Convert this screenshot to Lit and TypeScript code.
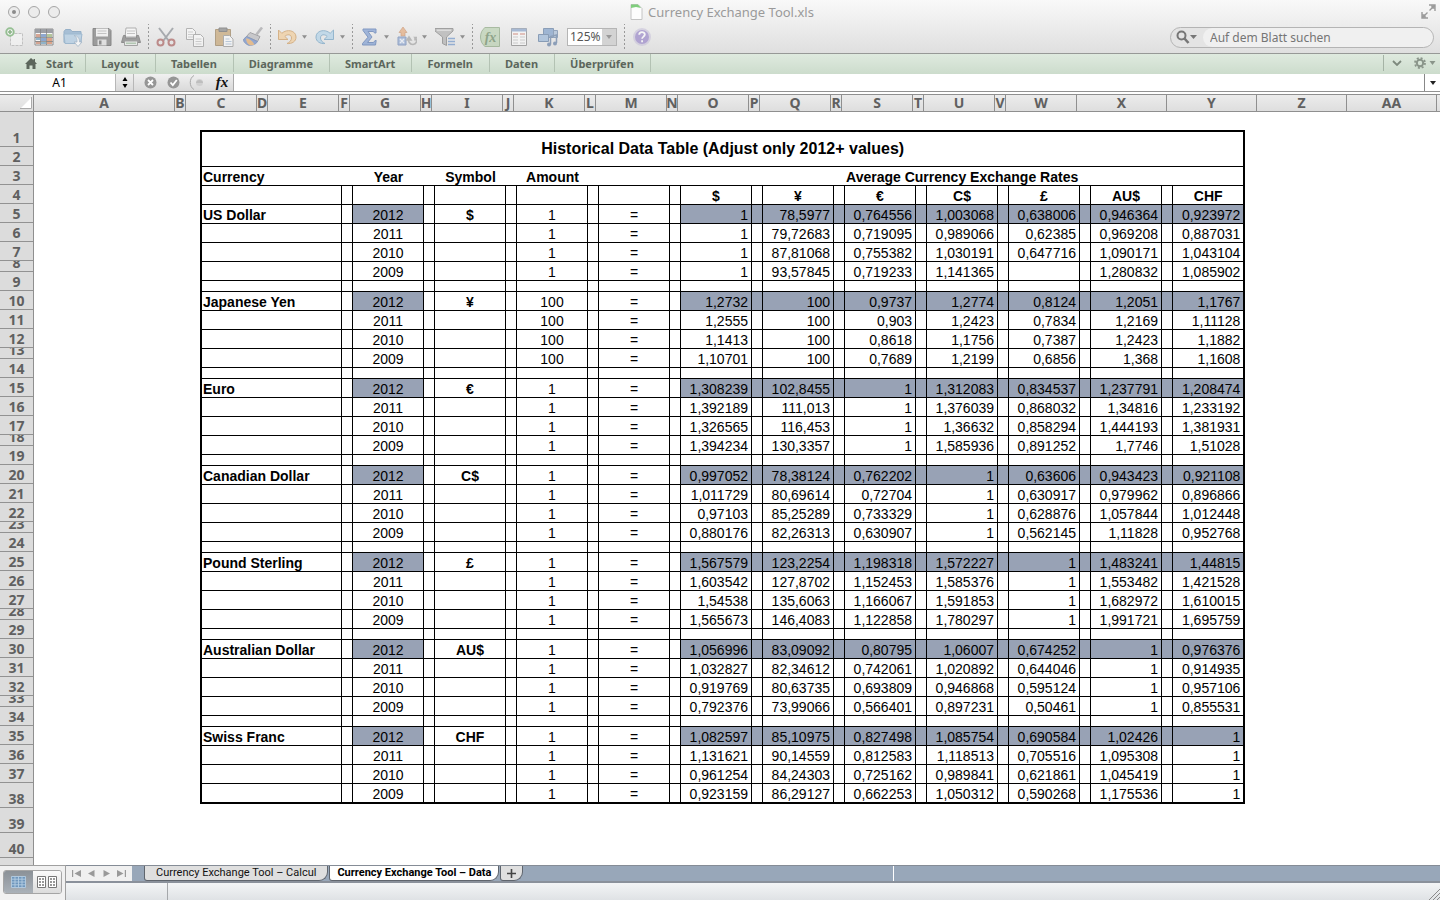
import { LitElement, html, css, svg, nothing } from "lit";
import { customElement, state } from "lit/decorators.js";
import { classMap } from "lit/directives/class-map.js";

interface Block {
  name: string;
  symbol: string;
  amount: string;
  rates: string[][];
}

const YEARS = ["2012", "2011", "2010", "2009"];
const SYMBOLS = ["$", "¥", "€", "C$", "£", "AU$", "CHF"];

const block = (name: string, symbol: string, amount: string, ...lines: string[]): Block => ({
  name,
  symbol,
  amount,
  rates: lines.map((line) => line.split(" ").map((v) => (v === "-" ? "" : v))),
});

const BLOCKS: Block[] = [
  block("US Dollar", "$", "1",
    "1 78,5977 0,764556 1,003068 0,638006 0,946364 0,923972",
    "1 79,72683 0,719095 0,989066 0,62385 0,969208 0,887031",
    "1 87,81068 0,755382 1,030191 0,647716 1,090171 1,043104",
    "1 93,57845 0,719233 1,141365 - 1,280832 1,085902"),
  block("Japanese Yen", "¥", "100",
    "1,2732 100 0,9737 1,2774 0,8124 1,2051 1,1767",
    "1,2555 100 0,903 1,2423 0,7834 1,2169 1,11128",
    "1,1413 100 0,8618 1,1756 0,7387 1,2423 1,1882",
    "1,10701 100 0,7689 1,2199 0,6856 1,368 1,1608"),
  block("Euro", "€", "1",
    "1,308239 102,8455 1 1,312083 0,834537 1,237791 1,208474",
    "1,392189 111,013 1 1,376039 0,868032 1,34816 1,233192",
    "1,326565 116,453 1 1,36632 0,858294 1,444193 1,381931",
    "1,394234 130,3357 1 1,585936 0,891252 1,7746 1,51028"),
  block("Canadian Dollar", "C$", "1",
    "0,997052 78,38124 0,762202 1 0,63606 0,943423 0,921108",
    "1,011729 80,69614 0,72704 1 0,630917 0,979962 0,896866",
    "0,97103 85,25289 0,733329 1 0,628876 1,057844 1,012448",
    "0,880176 82,26313 0,630907 1 0,562145 1,11828 0,952768"),
  block("Pound Sterling", "£", "1",
    "1,567579 123,2254 1,198318 1,572227 1 1,483241 1,44815",
    "1,603542 127,8702 1,152453 1,585376 1 1,553482 1,421528",
    "1,54538 135,6063 1,166067 1,591853 1 1,682972 1,610015",
    "1,565673 146,4083 1,122858 1,780297 1 1,991721 1,695759"),
  block("Australian Dollar", "AU$", "1",
    "1,056996 83,09092 0,80795 1,06007 0,674252 1 0,976376",
    "1,032827 82,34612 0,742061 1,020892 0,644046 1 0,914935",
    "0,919769 80,63735 0,693809 0,946868 0,595124 1 0,957106",
    "0,792376 73,99066 0,566401 0,897231 0,50461 1 0,855531"),
  block("Swiss Franc", "CHF", "1",
    "1,082597 85,10975 0,827498 1,085754 0,690584 1,02426 1",
    "1,131621 90,14559 0,812583 1,118513 0,705516 1,095308 1",
    "0,961254 84,24303 0,725162 0,989841 0,621861 1,045419 1",
    "0,923159 86,29127 0,662253 1,050312 0,590268 1,175536 1"),
];

/* Toolbar glyphs, all on a 20 x 20 grid. */
const ICONS: Record<string, unknown> = {
  add: svg`
    <path d="M5.500 6.500h12v12h-12z" fill="#f6f6f6" stroke="#aaa" stroke-dasharray="3 1"/>
    <circle cx="5" cy="5" r="3.800" fill="#fff" stroke="#5fa45a" stroke-width="1.800"/>
    <path d="M5 2.800v4.400M2.800 5h4.400" stroke="#4e9049" stroke-width="1.600"/>`,
  gallery: svg`
    <path d="M1 2h18v16H1z" fill="#fff" stroke="#555"/>
    <path d="M1 2h18v4H1z" fill="#6c6f78"/>
    <path d="M2 7h4v3H2zM2 14h4v3H2z" fill="#c97a5c"/>
    <path d="M7 7h5v3H7zM7 11h5v3H7z" fill="#547fc0"/>
    <path d="M13 7h5v3h-5z" fill="#8fae67"/>
    <path d="M13 11h5v6h-5z" fill="#d57b4e"/>
    <path d="M2 11h4v2H2zM7 15h5v2H7z" fill="#5a93b8"/>
    <path d="M6.500 2v16M12.500 2v16M1 10.500h18M1 14.500h18" stroke="#444" stroke-width=".8"/>`,
  open: svg`
    <path d="M1 4.500l1.500-2h5l1.500 2h9v11H1z" fill="#7ba3c8" stroke="#5f8ab2"/>
    <path d="M1 7h18l-1.500 9.500H2z" fill="#a5c6e2" stroke="#6f9abf"/>
    <path d="M11 8.500c3 1.500 3 4 3 6.500h-3l4 4.500 4-4.500h-2.500c0-3-1-6-5.500-6.500z" fill="#fff" stroke="#7c98b4" stroke-width=".8"/>`,
  save: svg`
    <path d="M1 1.500h16l2 2v15H1z" fill="#6b6b6b" stroke="#4b4b4b"/>
    <path d="M4 1.500h12v8H4z" fill="#f4f4f4"/><path d="M5.500 4h9M5.500 6.500h9" stroke="#aaa"/>
    <path d="M5.500 12.500h9v6h-9z" fill="#ddd"/><path d="M7 13.500h2.500v4H7z" fill="#555"/>`,
  print: svg`
    <path d="M5 1h10l1 9H4z" fill="#fcfcfc" stroke="#888"/>
    <path d="M6 4h8M6 6.500h8" stroke="#aaa"/>
    <path d="M2.500 8.500h2V11h11V8.500h2l2 7h-19z" fill="#6e6e6e" stroke="#555"/>
    <path d="M3.500 14h13v4.500h-13z" fill="#e7ece7" stroke="#777"/><path d="M5 16.200h10" stroke="#6b9a6b"/>`,
  cut: svg`
    <path d="M3 1l9.500 12.500M17 1L7.500 13.500" stroke="#7c8188" stroke-width="2"/>
    <circle cx="4.500" cy="15.500" r="3" fill="none" stroke="#a2504e" stroke-width="2"/>
    <circle cx="15.500" cy="15.500" r="3" fill="none" stroke="#a2504e" stroke-width="2"/>`,
  copy: svg`
    <path d="M1.500 1.500h6l3 3v8h-9z" fill="#fbfbfb" stroke="#8e8e8e"/><path d="M3 5h5M3 7.500h5M3 10h5" stroke="#bbb"/>
    <path d="M8.500 7.500h7l3 3v9h-10z" fill="#fbfbfb" stroke="#8e8e8e"/><path d="M10.500 12h6M10.500 14.500h6M10.500 17h6" stroke="#bbb"/>`,
  paste: svg`
    <path d="M1.500 2.500h15v16h-15z" fill="#c09a63" stroke="#8d7045"/>
    <path d="M5 1h8v3.500H5z" fill="#777" stroke="#555"/>
    <path d="M9.500 8.500h6l3.500 3.500v7.500H9.500z" fill="#fbfbfb" stroke="#888"/><path d="M11.500 12h4M11.500 14.500h6M11.500 17h6" stroke="#9bb4d0"/>`,
  brush: svg`
    <path d="M19 .5l-5.500 7" stroke="#9a9a9e" stroke-width="2.600"/>
    <path d="M7 5.500l10 4-2.500 5-11-5z" fill="#b4b4b8" stroke="#77777c"/>
    <path d="M3.500 9.500l11 5c-1.500 3-6.500 4.500-9.500 3.500C2.500 16.500 0 15 .8 12z" fill="#5c7fc4" stroke="#4767a5"/>
    <path d="M3 11.500c4 0 6 2.500 8.500 6-3.500 2-8 .500-8.500-6z" fill="#e2a157"/>`,
  undo: svg`
    <path d="M1.500 3v9.500H11L7.800 9.400C10 7 14.500 7 14.500 11c0 2.500-2 4.500-4.500 5.500 5 .5 9-2 9-6.500C19 3.500 10 1.500 4.800 6.300z" fill="#f3c98f" stroke="#c98e49"/>`,
  redo: svg`
    <path d="M18.500 3v9.500H9l3.200-3.100C10 7 5.500 7 5.500 11c0 2.500 2 4.500 4.500 5.500-5 .5-9-2-9-6.500C1 3.500 10 1.500 15.200 6.300z" fill="#a9cfe8" stroke="#5f96bd"/>`,
  sum: svg`<path d="M4 2h13v4h-1.500l-1-1.500H9L13 10l-4.500 5.500h6l1.500-2h1.200l-.7 4.500H3.500v-1.500L9 10.200 4 3.500z" fill="#6f93cf" stroke="#3f65a8"/>`,
  sort: svg`
    <path d="M6 0l4 5.500H8V9H4V5.500H2z" fill="#e3a06c" stroke="#bd7748" stroke-width=".7"/>
    <path d="M1 10h8v8H1z" fill="#8ba6d3" stroke="#5877ad"/><path d="M3 12l4 4M7 12l-4 4" stroke="#eaf0fa" stroke-width="1.400"/>
    <path d="M12 10c-1.500 4 .500 7.500 4 7.500 3.500-.5 5-4 2-7h2M12 10l-2 3h4zM18 10.500v3" fill="none" stroke="#999" stroke-width="1.600"/>`,
  filter: svg`
    <path d="M0 1.500h18V4L11.500 10v8.500l-4-2V10L0 4z" fill="#a8a8a8" stroke="#6f6f6f"/><path d="M2 3.200h14" stroke="#e8e8e8"/>
    <path d="M13 11.500h7M13 14.500h7M13 17.500h7" stroke="#5f8ac5" stroke-width="1.600"/>`,
  table: svg`
    <path d="M2.500 1.500h15v17h-15z" fill="#fbfbfb" stroke="#777"/><path d="M2.500 1.500h15v3h-15z" fill="#7c9ac6"/>
    <path d="M4 7h5M11 7h5" stroke="#d38b7e" stroke-width="1.400"/>
    <path d="M4 10h5M11 10h5M4 13h5M11 13h5M4 16h5M11 16h5" stroke="#b9b9b9"/>`,
  media: svg`
    <path d="M5.500 1.500h10v9h-10z" fill="#6d93c4" stroke="#4c6c96"/><path d="M15.500 3.500h4v7h-4z" fill="#9db6d5" stroke="#5b779c"/>
    <path d="M.5 7.500h10v7H.5z" fill="#8fb0d6" stroke="#4c6c96"/>
    <path d="M12.500 17.500v-8l6-1.500v8" fill="none" stroke="#52719b" stroke-width="1.500"/>
    <circle cx="11" cy="17.500" r="2" fill="#52719b"/><circle cx="17" cy="16.500" r="2" fill="#52719b"/>`,
};

/* Column letter followed by its width class. */
const COLUMNS: [string, string][] = [
  ["A", "first"], ["B", "slim"], ["C", "mid"], ["D", "slim"], ["E", "mid"], ["F", "slim"],
  ["G", "mid"], ["H", "slim"], ["I", "mid"], ["J", "slim"], ["K", "mid"], ["L", "slim"],
  ["M", "mid"], ["N", "slim"], ["O", "mid"], ["P", "slim"], ["Q", "mid"], ["R", "slim"],
  ["S", "mid"], ["T", "slim"], ["U", "mid"], ["V", "slim"], ["W", "mid"],
  ["X", "full"], ["Y", "full"], ["Z", "full"], ["AA", "full"], ["", "rest"],
];

const rowSize = (n: number) =>
  n === 1 ? "top" : n >= 38 ? "tall" : n % 5 === 3 && n > 3 ? "thin" : "";

@customElement("sheet-table")
export class SheetTable extends LitElement {
  static styles = css`
    :host { display: block; width: max-content; }
    table {
      border: 2px solid #000;
      border-collapse: separate;
      border-spacing: 0;
      table-layout: fixed;
      width: 1045px;
      font: 14px/16px "Liberation Sans", Arial, sans-serif;
      color: #000;
    }
    .c-name { width: 140px; }
    .c-gap { width: 11px; }
    .c-cell { width: 71px; }
    .c-last { width: 70px; }
    th, td {
      box-sizing: border-box;
      height: 19px;
      padding: 2px 0 0;
      border: 0 solid #000;
      border-width: 0 1px 1px 0;
      text-align: center;
      white-space: nowrap;
    }
    th { font-weight: bold; }
    tr > :last-child { border-right: 0; }
    .open { border-right: 0; }
    .title { height: 35px; padding: 0; font-size: 16px; line-height: 18px; border-right: 0; }
    .name { text-align: left; padding-left: 1px; }
    .num { text-align: right; padding-right: 3px; }
    .fill { background: #98a2b5; }
    .spacer td { height: 11px; padding: 0; line-height: 10px; }
    .final > * { border-bottom: 0; height: 18px; }
  `;

  private gapCell(fill = false) {
    return html`<td class=${classMap({ fill })}></td>`;
  }

  private line(b: Block, i: number, last: boolean) {
    const fill = i === 0;
    return html`<tr class=${classMap({ final: last })}>
      <th class="name" scope="row">${fill ? b.name : nothing}</th>
      ${this.gapCell()}
      <td class=${classMap({ fill })}>${YEARS[i]}</td>
      ${this.gapCell()}
      <th>${fill ? b.symbol : nothing}</th>
      ${this.gapCell()}
      <td>${b.amount}</td>
      ${this.gapCell()}
      <td>=</td>
      ${b.rates[i].map((v, k) => html`${this.gapCell(fill && k > 0)}<td class=${classMap({ num: true, fill })}>${v}</td>`)}
    </tr>`;
  }

  render() {
    const empty = Array.from({ length: 23 });
    return html`<table>
      <colgroup>
        <col class="c-name" />
        ${Array.from({ length: 11 }).map((_, i) => html`<col class="c-gap" /><col class=${i === 10 ? "c-last" : "c-cell"} />`)}
      </colgroup>
      <thead>
        <tr><th class="title" colspan="23">Historical Data Table (Adjust only 2012+ values)</th></tr>
        <tr>
          <th class="name open">Currency</th><th class="open"></th>
          <th class="open">Year</th><th class="open"></th>
          <th class="open">Symbol</th><th class="open"></th>
          <th class="open">Amount</th><th class="open"></th>
          <th class="open"></th><th class="open"></th>
          <th colspan="13">Average Currency Exchange Rates</th>
        </tr>
        <tr>
          ${empty.slice(0, 9).map(() => html`<th></th>`)}
          ${SYMBOLS.map((s) => html`<th></th><th>${s}</th>`)}
        </tr>
      </thead>
      <tbody>
        ${BLOCKS.map((b, n) => {
          const lastBlock = n === BLOCKS.length - 1;
          return html`${YEARS.map((_, i) => this.line(b, i, lastBlock && i === 3))}
          ${lastBlock ? nothing : html`<tr class="spacer">${empty.map(() => html`<td></td>`)}</tr>`}`;
        })}
      </tbody>
    </table>`;
  }
}

@customElement("app-root")
export class AppRoot extends LitElement {
  @state() private sheet = 1;

  static styles = css`
    :host {
      display: flex;
      flex-direction: column;
      height: 100vh;
      overflow: hidden;
      background: #fff;
      color: #5c5c5c;
      font-family: "Noto Sans", "Open Sans", sans-serif;
    }
    *, *::before { box-sizing: border-box; }
    button, input, select { font: inherit; color: inherit; margin: 0; padding: 0; border: 0; background: none; border-radius: 0; outline: 0; }
    svg { display: block; flex: none; }

    .chrome { background: linear-gradient(#f9f9f9, #dfdfdf); border-bottom: 1px solid #979997; height: 54px; flex: none; }
    .titlebar { display: grid; grid-template-columns: 1fr auto 1fr; align-items: center; height: 23px; padding: 0 4px 0 8px; }
    .lights { display: flex; gap: 8px; }
    .light { width: 12px; height: 12px; border: 1px solid #a6a6a6; border-radius: 50%; background: #ececec; display: grid; place-items: center; }
    .light.dirty::before { content: ""; width: 4px; height: 4px; border-radius: 50%; background: #8b8b8b; }
    .doc { display: flex; align-items: center; gap: 5px; font-size: 13px; line-height: 18px; color: #9a9a9a; }
    .expand { justify-self: end; }

    .toolbar { display: flex; align-items: center; height: 28px; }
    .tool { width: 29px; height: 26px; display: grid; place-items: center; opacity: .6; flex: none; }
    .tool.menu { width: 38px; grid-template-columns: 28px 6px; justify-content: start; }
    .dots { width: 6px; flex: none; height: 26px; background: linear-gradient(#777 50%, transparent 50%) center / 1px 4px repeat-y; opacity: .7; }
    .zoom { display: flex; align-items: center; height: 18px; margin: 0 4px 0 5px; background: #fff; border: 1px solid #b5b5b5; font-size: 12px; flex: none; }
    .zoom select { appearance: none; width: 34px; height: 16px; line-height: 16px; padding-left: 2px; color: #555; }
    .zoom .drop { width: 14px; height: 16px; background: #d3d3d3; display: grid; place-items: center; }
    .search { display: flex; align-items: center; margin: 0 6px 0 auto; width: 264px; height: 21px; border: 1px solid #b4b4b4; border-radius: 11px; background: #e4e4e4; flex: none; overflow: hidden; }
    .search svg { margin: 0 6px 0 5px; }
    .search input { flex: 1; min-width: 0; height: 19px; border-radius: 10px; background: #f0f0f0; padding-left: 7px; font-size: 12px; }
    .search input::placeholder { color: #757575; opacity: 1; }

    .ribbon { display: flex; align-items: center; height: 20px; padding-bottom: 2px; background: linear-gradient(#dfeadf, #ccdccc); flex: none; }
    .ribbon button { display: flex; align-items: center; justify-content: center; gap: 9px; height: 18px; padding: 0 16px 0 15px; border-right: 1px solid #b3c2b3; font-size: 11px; font-weight: bold; color: #5c665c; white-space: nowrap; }
    .ribbon button:first-child { padding: 0 12px 0 25px; }
    .ribbon .end { margin-left: auto; display: flex; align-items: center; gap: 12px; height: 16px; padding: 0 4px 0 8px; border-left: 1px solid #a5b3a5; }

    .formula { display: flex; height: 18px; border-bottom: 1px solid #929292; background: linear-gradient(#f0f0f0, #d9d9d9); flex: none; }
    .formula .ref { width: 115px; padding-left: 4px; background: #fff; text-align: center; font-size: 12px; color: #000; }
    .formula .step { width: 19px; border: solid #b7b7b7; border-width: 0 1px; display: grid; place-items: center; }
    .formula .acts { width: 99px; display: flex; align-items: center; justify-content: space-between; padding: 0 3px 0 10px; }
    .formula .entry { flex: 1; min-width: 0; background: #fff; border-left: 1px solid #aaa; }
    .formula .more { width: 16px; background: #fff; border-left: 1px solid #888; display: grid; place-items: center; }

    .heads { display: flex; height: 18px; margin-top: 2px; border: solid #8f8f8f; border-width: 1px 0; background: linear-gradient(#ececec, #dedede); font-size: 14px; line-height: 16px; font-weight: bold; color: #606060; flex: none; }
    .corner { width: 34px; border-right: 1px solid #8f8f8f; display: flex; align-items: center; justify-content: flex-end; padding-right: 1px; flex: none; }
    .col { display: flex; justify-content: center; border-right: 1px solid #8f8f8f; overflow: hidden; flex: none; }
    .col.first { width: 141px; }
    .col.slim { width: 11px; }
    .col.mid { width: 71px; }
    .col.full { width: 90px; }
    .col.rest { flex: 1; border-right: 0; }

    .body { display: flex; flex: 1; min-height: 0; overflow: hidden; }
    .rows { width: 34px; border-right: 1px solid #8f8f8f; background: #dcdcdc; font-size: 14px; line-height: 16px; font-weight: bold; color: #606060; flex: none; overflow: hidden; }
    .row { display: flex; align-items: flex-end; justify-content: center; height: 19px; border-bottom: 1px solid #929292; overflow: hidden; }
    .row.top { height: 35px; }
    .row.thin { height: 11px; }
    .row.tall { height: 25px; }
    .canvas { flex: 1; min-width: 0; padding: 18px 0 0 166px; overflow: hidden; }

    .foot { display: flex; height: 35px; flex: none; }
    .views { width: 66px; border: solid #a0a0a0; border-width: 1px 1px 0 0; background: #f1f1f1; padding: 4px 3px; flex: none; }
    .views div { display: flex; height: 24px; border: 1px solid #a5a5a5; border-radius: 3px; overflow: hidden; }
    .views button { flex: 1; display: grid; place-items: center; background: linear-gradient(#fafafa, #dcdcdc); }
    .views .on { background: linear-gradient(#8b9197, #aab1b8); }
    .right { flex: 1; min-width: 0; display: flex; flex-direction: column; }
    .tabs { display: flex; height: 18px; background: #98a7b9; border-top: 1px solid #858c96; border-bottom: 2px solid #8a919b; }
    .nav { display: flex; align-items: center; justify-content: space-between; width: 66px; height: 15px; padding: 0 6px; background: #f0f0f0; margin-right: 12px; flex: none; }
    .tab { height: 15px; padding: 0 11px; margin-right: 1px; background: #dfdfdf; border: solid #5f656d; border-width: 0 1px 1px; border-radius: 0 0 9px 3px; font-family: Roboto, "Noto Sans", sans-serif; font-size: 11px; line-height: 14px; color: #111; white-space: nowrap; }
    .tab.on { background: #fff; font-weight: bold; padding: 0 7px; color: #000; }
    .tab.plus { width: 23px; padding: 0; display: grid; place-items: center; }
    .split { width: 1px; height: 15px; background: #fff; margin-left: auto; margin-right: 546px; }
    .status { flex: 1; display: flex; justify-content: space-between; align-items: flex-end; background: linear-gradient(#f3f5f6, #dfe2e5); }
    .status .left { width: 102px; height: 17px; border-right: 1px solid #a5a8ab; }
  `;

  private arrow(w = 6, color = "#555") {
    return html`<svg width=${w} height="4" viewBox="0 0 6 4"><path d="M0 0h6L3 4z" fill=${color} /></svg>`;
  }

  private tool(icon: string, label: string, menu = false) {
    return html`<button class=${classMap({ tool: true, menu })} aria-label=${label}>
      <svg width="20" height="20" viewBox="0 0 20 20" fill="none">${ICONS[icon]}</svg>
      ${menu ? this.arrow(5) : nothing}
    </button>`;
  }

  private renderChrome() {
    return html`<header class="chrome">
      <div class="titlebar">
        <div class="lights">
          <button class="light dirty" aria-label="Schließen"></button>
          <button class="light" aria-label="Minimieren"></button>
          <button class="light" aria-label="Zoomen"></button>
        </div>
        <div class="doc">
          <svg width="13" height="16" viewBox="0 0 13 16"><path d="M1 .5h7l4 4v11H1z" fill="#fdfdfd" stroke="#c4c4c4" /><path d="M1 .5h7l3 3.500L6 3 1 4z" fill="#7fce7c" /></svg>
          <span>Currency Exchange Tool.xls</span>
        </div>
        <button class="expand" aria-label="Vollbild">
          <svg width="15" height="15" viewBox="0 0 15 15" fill="none" stroke="#9a9a9a" stroke-width="1.400"><path d="M8 1h6v6M14 1L8.500 6.500M11 1v3h3M1 8v6h6M1 14l5.500-5.500M1 11h3v3" /></svg>
        </button>
      </div>
      <div class="toolbar">
        ${this.tool("add", "Neu")}${this.tool("gallery", "Vorlagen")}${this.tool("open", "Öffnen")}${this.tool("save", "Sichern")}${this.tool("print", "Drucken")}
        <span class="dots"></span>
        ${this.tool("cut", "Ausschneiden")}${this.tool("copy", "Kopieren")}${this.tool("paste", "Einfügen")}${this.tool("brush", "Format übertragen")}
        <span class="dots"></span>
        ${this.tool("undo", "Widerrufen", true)}${this.tool("redo", "Wiederholen", true)}
        <span class="dots"></span>
        ${this.tool("sum", "Summe", true)}${this.tool("sort", "Sortieren", true)}${this.tool("filter", "Filtern", true)}
        <span class="dots"></span>
        <button class="tool" aria-label="Formel-Generator">
          <svg width="20" height="20" viewBox="0 0 20 20"><path d="M5 .5h14.500v19H5C-1 15-1 5 5 .5z" fill="#b4ceaa" stroke="#7d9c71" /><text x="10.500" y="14.500" text-anchor="middle" font-family="Liberation Serif, serif" font-style="italic" font-weight="bold" font-size="14" fill="#54774c">fx</text></svg>
        </button>
        ${this.tool("table", "Toolbox")}${this.tool("media", "Medien")}
        <span class="zoom">
          <select aria-label="Zoom"><option>125%</option></select>
          <span class="drop">${this.arrow(6, "#999")}</span>
        </span>
        <span class="dots"></span>
        <button class="tool" aria-label="Hilfe">
          <svg width="18" height="18" viewBox="0 0 18 18"><circle cx="9" cy="9" r="8" fill="#8d78c4" stroke="#c8c2da" stroke-width="2" /><path d="M6.200 6.800c0-3.500 5.600-3.500 5.600-.2 0 2-2.700 2-2.700 4.200M9.100 12.300v2" fill="none" stroke="#fff" stroke-width="1.800" /></svg>
        </button>
        <label class="search">
          <svg width="21" height="15" viewBox="0 0 21 15" fill="none"><circle cx="5.500" cy="5.500" r="4" stroke="#777" stroke-width="2" /><path d="M8.500 8.500l4 4.500" stroke="#777" stroke-width="2.600" /><path d="M14 5h7l-3.500 4z" fill="#777" /></svg>
          <input type="text" aria-label="Auf dem Blatt suchen" placeholder="Auf dem Blatt suchen" />
        </label>
      </div>
    </header>`;
  }

  private renderBars() {
    const names = ["Layout", "Tabellen", "Diagramme", "SmartArt", "Formeln", "Daten", "Überprüfen"];
    return html`<nav class="ribbon">
        <button><svg width="12" height="11" viewBox="0 0 12 11"><path d="M6 0l2.500 2.300V1H10v2.700L12 6h-1.500v5h-3V7.500h-3V11h-3V6H0z" fill="#5c665c" /></svg>Start</button>
        ${names.map((n) => html`<button>${n}</button>`)}
        <div class="end">
          <svg width="10" height="6" viewBox="0 0 10 6"><path d="M1 1l4 4 4-4" fill="none" stroke="#7d897d" stroke-width="1.800" /></svg>
          <svg width="22" height="12" viewBox="0 0 22 12"><circle cx="6" cy="6" r="3.200" fill="none" stroke="#8a958a" stroke-width="2" /><circle cx="6" cy="6" r="5" fill="none" stroke="#8a958a" stroke-width="1.800" stroke-dasharray="2 1.930" /><path d="M15.500 4h6l-3 4z" fill="#8a958a" /></svg>
        </div>
      </nav>
      <div class="formula">
        <input class="ref" aria-label="Namenfeld" value="A1" />
        <button class="step" aria-label="Zellauswahl"><svg width="6" height="11" viewBox="0 0 6 11"><path d="M3 0l2.500 4h-5zM3 11L.5 7h5z" fill="#000" /></svg></button>
        <div class="acts">
          <svg width="13" height="13" viewBox="0 0 13 13"><circle cx="6.500" cy="6.500" r="6" fill="#969696" /><path d="M4 4l5 5M9 4L4 9" stroke="#fff" stroke-width="1.800" /></svg>
          <svg width="13" height="13" viewBox="0 0 13 13"><circle cx="6.500" cy="6.500" r="6" fill="#969696" /><path d="M3.500 6.500l2.300 2.500 4-5" fill="none" stroke="#fff" stroke-width="1.800" /></svg>
          <svg width="15" height="15" viewBox="0 0 15 15"><path d="M5 .5C0 3 0 12 5 14.500" fill="none" stroke="#a8a8a8" /><path d="M7 8c0-4 7-4 7 0z" fill="#b4b4b4" /><circle cx="10.500" cy="7.500" r="3.500" fill="#c4c4c4" opacity=".6" /></svg>
          <svg width="16" height="16" viewBox="0 0 16 16"><text x="8" y="12" text-anchor="middle" font-family="Liberation Serif, serif" font-style="italic" font-weight="bold" font-size="15" fill="#111">fx</text></svg>
        </div>
        <input class="entry" aria-label="Formel" />
        <button class="more" aria-label="Bearbeitungsleiste erweitern">${this.arrow(8, "#222")}</button>
      </div>`;
  }

  private navArrow(label: string, d: string) {
    return html`<button aria-label=${label}><svg width="9" height="7" viewBox="0 0 9 7"><path d=${d} fill="#999" /></svg></button>`;
  }

  private renderFoot() {
    const sheets = ["Currency Exchange Tool – Calcul", "Currency Exchange Tool – Data"];
    return html`<footer class="foot">
      <div class="views"><div>
        <button class="on" aria-label="Normalansicht"><svg width="15" height="12" viewBox="0 0 15 12"><path d="M.5.5h14v11H.5zM.5 3.200h14M.5 6h14M.5 8.800h14M4 .5v11M7.500.5v11M11 .5v11" fill="#6f97bd" stroke="#b4cde2" stroke-width=".9" /></svg></button>
        <button aria-label="Seitenlayout"><svg width="20" height="12" viewBox="0 0 20 12"><path d="M.5.500h8v11h-8zM11.500.500h8v11h-8z" fill="#fff" stroke="#777" /><path d="M2 3h5M2 6h5M2 9h5M13 3h5M13 6h5M13 9h5" stroke="#777" stroke-width="1.400" stroke-dasharray="2 1" /></svg></button>
      </div></div>
      <div class="right">
        <div class="tabs">
          <div class="nav">
            ${this.navArrow("Erstes Blatt", "M0 0h1.200v7H0zM9 0v7L2.500 3.500z")}
            ${this.navArrow("Vorheriges Blatt", "M7.500 0v7L1 3.500z")}
            ${this.navArrow("Nächstes Blatt", "M1.500 0v7L8 3.500z")}
            ${this.navArrow("Letztes Blatt", "M0 0v7l6.500-3.500zM7.800 0H9v7H7.800z")}
          </div>
          ${sheets.map((s, i) => html`<button class=${classMap({ tab: true, on: this.sheet === i })} @click=${() => (this.sheet = i)}>${s}</button>`)}
          <button class="tab plus" aria-label="Neues Blatt"><svg width="9" height="9" viewBox="0 0 9 9"><path d="M4.500 0v9M0 4.500h9" stroke="#444" stroke-width="1.600" /></svg></button>
          <span class="split"></span>
        </div>
        <div class="status">
          <span class="left"></span>
          <svg width="12" height="12" viewBox="0 0 12 12"><path d="M1 12L12 1M5 12l7-7M9 12l3-3" stroke="#8a8a8a" /></svg>
        </div>
      </div>
    </footer>`;
  }

  render() {
    return html`${this.renderChrome()}${this.renderBars()}
      <div class="heads">
        <div class="corner"><svg width="12" height="12" viewBox="0 0 12 12"><path d="M12 0v12H0z" fill="#fff" /><path d="M11.500 0v11.500H0" fill="none" stroke="#aaa" /></svg></div>
        ${COLUMNS.map(([name, size]) => html`<div class="col ${size}">${name}</div>`)}
      </div>
      <main class="body">
        <div class="rows">${Array.from({ length: 41 }).map((_, i) => html`<div class="row ${rowSize(i + 1)}">${i < 40 ? i + 1 : nothing}</div>`)}</div>
        <div class="canvas"><sheet-table></sheet-table></div>
      </main>
      ${this.renderFoot()}`;
  }
}
